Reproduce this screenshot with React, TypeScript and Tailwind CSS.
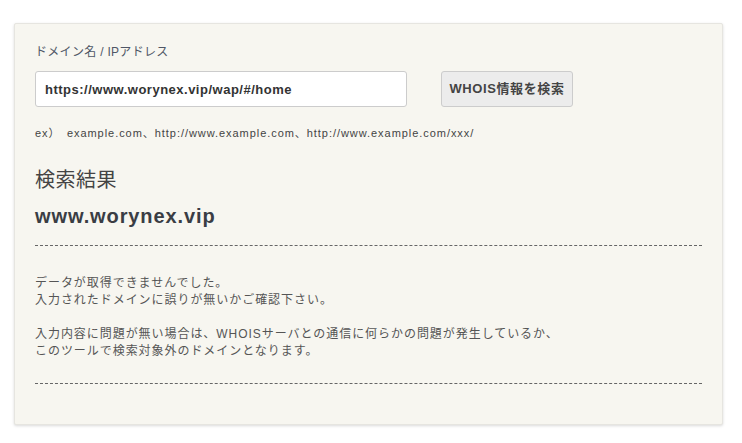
export default function App() {
  const font = { fontFamily: '"Liberation Sans", Arial, "Noto Sans CJK JP", sans-serif' };

  return (
    <div className="min-h-screen bg-white pt-[23px] pl-[14px]" style={font}>
      <div className="w-[709px] bg-[#f7f6f0] border border-[#e6e5e0] rounded-[2px] shadow-[0_1px_3px_rgba(0,0,0,0.15)] pt-[19px] px-[20px] pb-[40px]">
        {/* search form */}
        <div className="text-[12px] leading-[18px] text-[#4f5666] tracking-[0.3px]">
          ドメイン名 / IPアドレス
        </div>
        <div className="mt-[10px] flex items-center">
          <input
            readOnly
            value="https://www.worynex.vip/wap/#/home"
            className="w-[372px] h-[36px] bg-white border border-[#cccccc] rounded-[3px] px-[9px] text-[13px] font-bold text-[#333] tracking-[0.5px] outline-none"
            style={font}
          />
          <button className="ml-[34px] w-[132px] h-[36px] bg-[#ececec] border border-[#cccccc] rounded-[3px] text-[13px] font-bold text-[#444] tracking-[0.6px]">
            WHOIS情報を検索
          </button>
        </div>
        <div className="mt-[18px] text-[11px] leading-[16px] text-[#444] tracking-[0.95px]">
          ex）　example.com、http://www.example.com、http://www.example.com/xxx/
        </div>

        {/* result */}
        <h2 className="mt-[25px] text-[20px] leading-[28px] text-[#444] tracking-[0.5px]">検索結果</h2>
        <h3 className="mt-[8px] text-[20px] leading-[28px] font-bold text-[#3a3d44] tracking-[0.9px]">
          www.worynex.vip
        </h3>
        <div className="mt-[15px] border-t border-dashed border-[#666]" />
        <p className="mt-[29px] text-[12px] leading-[17px] text-[#555] tracking-[0.95px]">
          データが取得できませんでした。
          <br />
          入力されたドメインに誤りが無いかご確認下さい。
          <br />
          <br />
          入力内容に問題が無い場合は、WHOISサーバとの通信に何らかの問題が発生しているか、
          <br />
          このツールで検索対象外のドメインとなります。
        </p>
        <div className="mt-[23px] border-t border-dashed border-[#666]" />
      </div>
    </div>
  );
}
